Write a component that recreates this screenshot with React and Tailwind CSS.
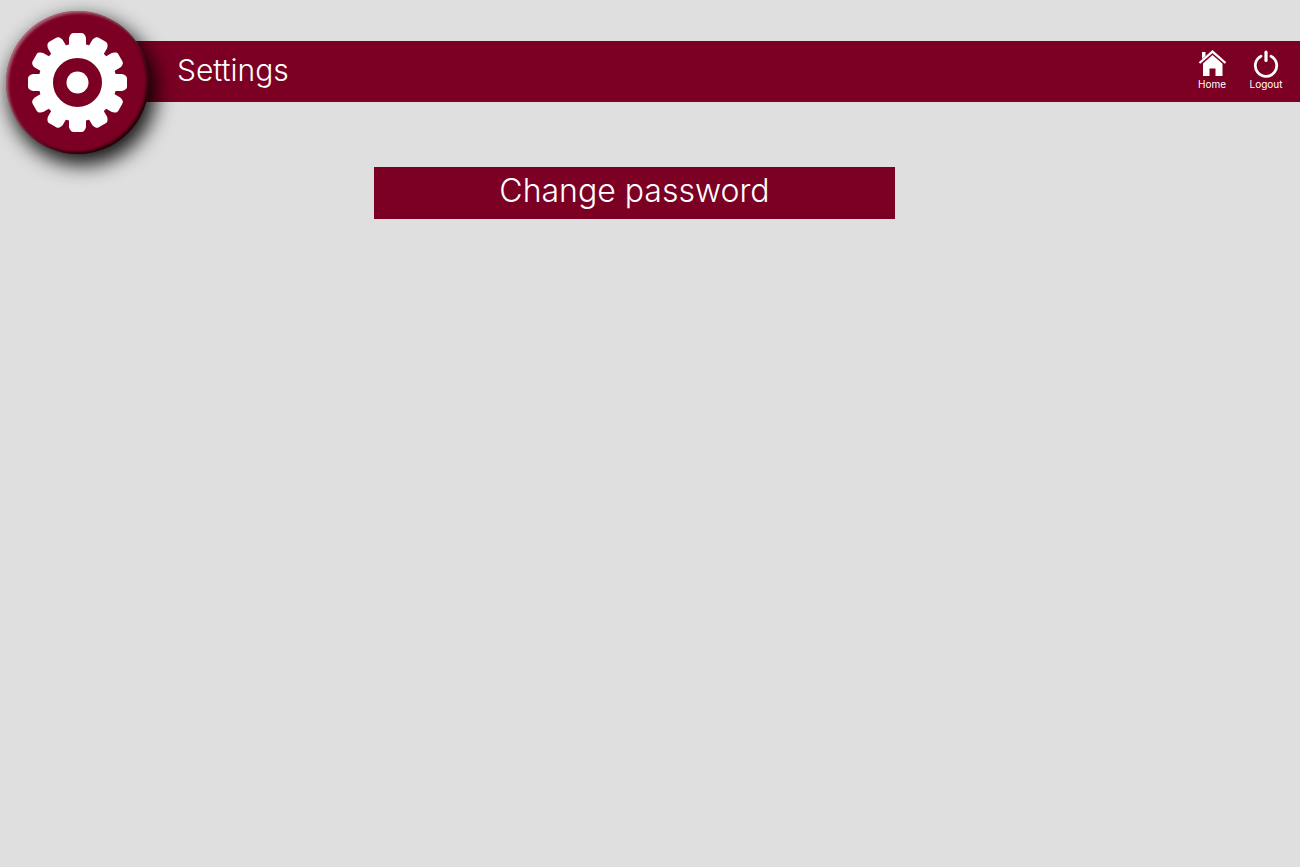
const TEETH = [0, 30, 60, 90, 120, 150, 180, 210, 240, 270, 300, 330];

function GearIcon() {
  return (
    <svg viewBox="-49.5 -49.5 99 99" className="size-[99px]" fill="#fff" aria-hidden="true">
      {TEETH.map((angle) => (
        <path
          key={angle}
          transform={`rotate(${angle})`}
          d="M-8.500 -36V-44.500Q-8 -47 -6.500 -48.500Q-5.500 -49.500 -4 -49.500H4Q5.500 -49.500 6.500 -48.500Q8 -47 8.500 -44.500V-36Z"
        />
      ))}
      <circle r="31.750" fill="none" stroke="#fff" strokeWidth="14.500" />
      <circle r="11" />
    </svg>
  );
}

function HomeIcon() {
  return (
    <svg viewBox="0 0 28 28" className="size-7" fill="#fff" aria-hidden="true">
      <path d="M4 2H7.500V6L4 9Z" />
      <path d="M1.500 13L14.500 1.600L27.500 13" fill="none" stroke="#fff" strokeWidth="2.300" />
      <path d="M14.500 5L24.500 13.700V26H17.500V18.500H11.500V26H5V13.400Z" />
    </svg>
  );
}

function PowerIcon() {
  return (
    <svg viewBox="0 0 28 28" className="size-7" fill="none" stroke="#fff" aria-hidden="true">
      <path d="M9 6.200A10.700 10.700 0 1 0 19 6.200" strokeWidth="2.800" strokeLinecap="round" />
      <path d="M14 2.200V10.500" strokeWidth="3.200" strokeLinecap="round" />
    </svg>
  );
}

function NavLink({ label, children }) {
  return (
    <a href="#" className="flex w-[54px] flex-col items-center text-[10px] leading-3 text-white">
      {children}
      <span>{label}</span>
    </a>
  );
}

export default function App() {
  return (
    <div className="min-h-screen bg-[#dfdfdf] pt-[41px] font-['Century_Gothic','Inter',sans-serif]">
      <header className="relative ml-[77px] flex h-[61px] items-center justify-between bg-[#7b0023] pl-[100px] pr-[7px]">
        <div className="absolute -left-[71px] -top-[30px] flex size-[143px] items-center justify-center rounded-full bg-[#7b0023] shadow-[5px_9px_20px_2px_rgba(0,0,0,0.9),inset_2px_2px_3px_rgba(255,255,255,0.4),inset_-2px_-2px_3px_rgba(0,0,0,0.8)]">
          <GearIcon />
        </div>
        <h1 className="pb-1 text-[30px] font-light leading-10 text-white">Settings</h1>
        <nav className="flex pb-1">
          <NavLink label="Home">
            <HomeIcon />
          </NavLink>
          <NavLink label="Logout">
            <PowerIcon />
          </NavLink>
        </nav>
      </header>
      <main className="flex justify-center pr-[31px] pt-[65px]">
        <button
          type="button"
          className="h-[52px] w-[521px] max-w-full bg-[#7b0023] pb-1 text-[32px] font-light leading-10 text-white"
        >
          Change password
        </button>
      </main>
    </div>
  );
}
